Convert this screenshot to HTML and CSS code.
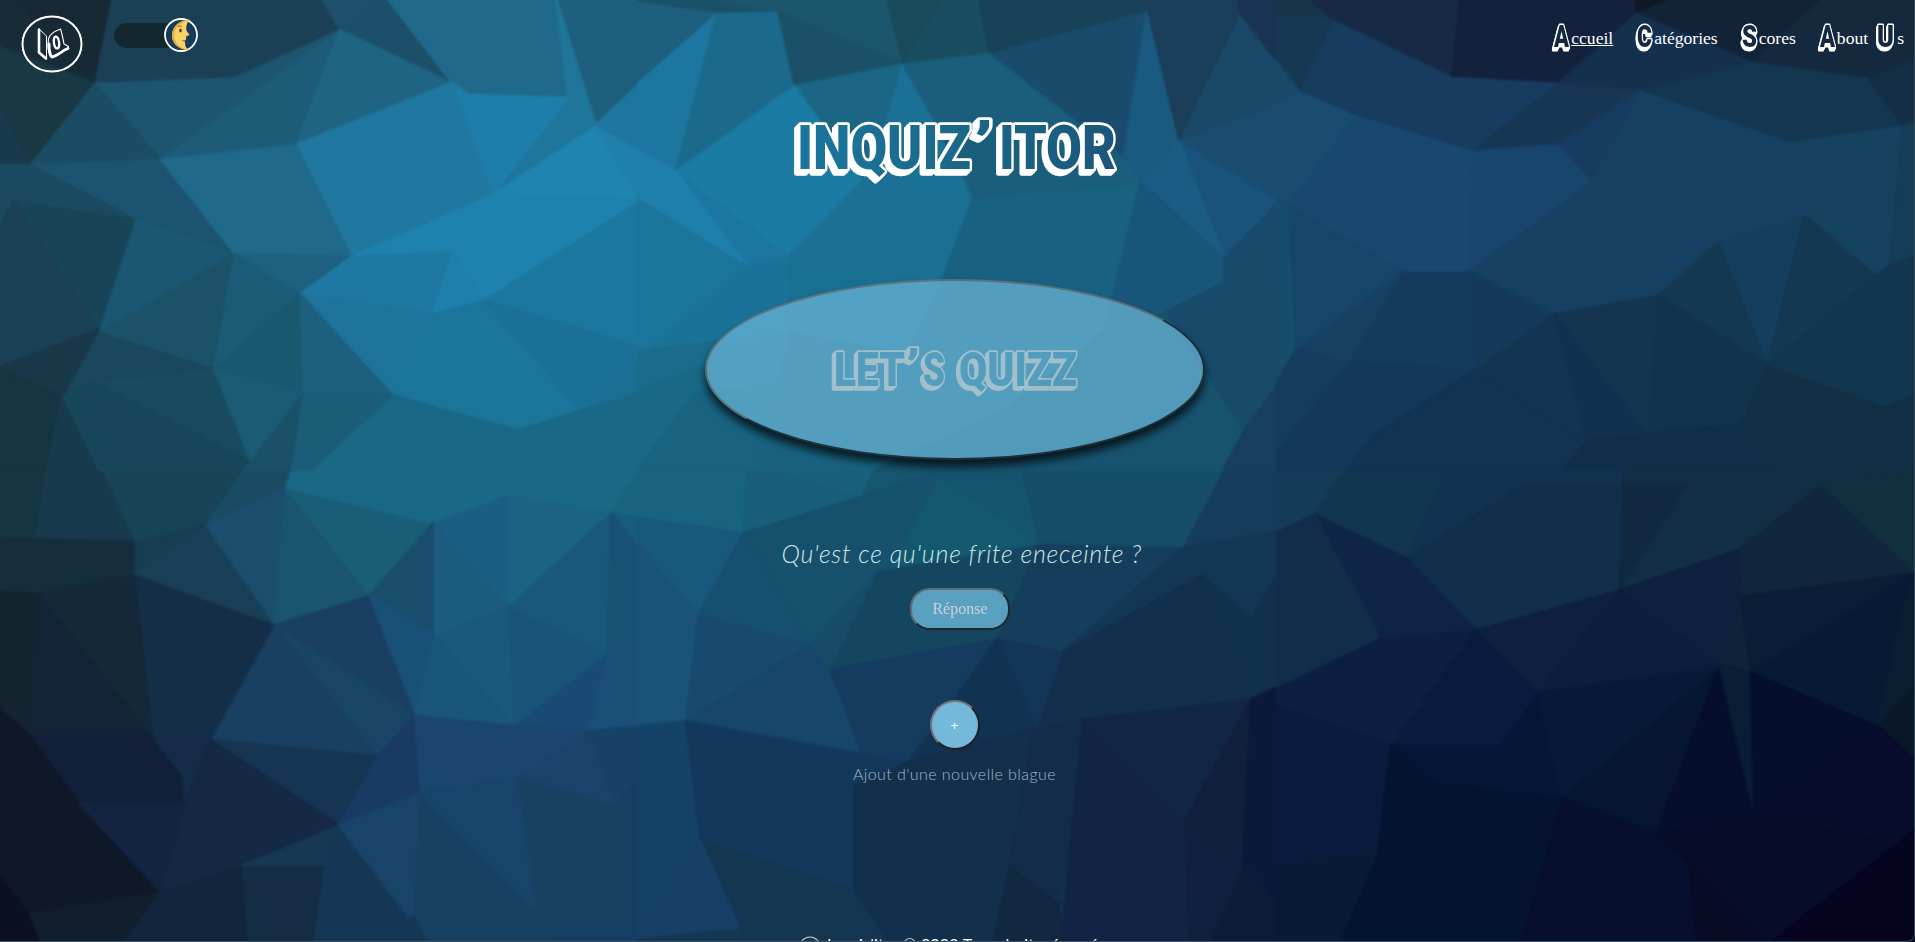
FILE: index.html
```html
<!DOCTYPE html>
<html lang="fr">
<head>
<meta charset="utf-8">
<title>Inquiz'itor</title>
<link rel="stylesheet" href="styles.css">
</head>
<body>
<div class="page">
<svg class="backdrop" viewBox="0 0 1915 942" preserveAspectRatio="none" aria-hidden="true">
<!-- top left facets -->
<svg x="0" y="0" width="640" height="471" viewBox="0 0 1568 1413" preserveAspectRatio="none">
<path color="#1b5570" d="M0 0H1568V1413H0z"/>
<path color="#182c38" d="M0 0 45 0 240 258 0 145z"/><path color="#162935" d="M45 0 283 0 240 258z"/><path color="#1b4055" d="M283 0 790 0 838 98 580 242 240 258z"/><path color="#183843" d="M0 145 240 258 82 500 0 310z"/><path color="#183a4c" d="M0 310 82 500 0 500z"/><path color="#1d506a" d="M790 0 950 0 838 98z"/><path color="#1d5570" d="M240 258 580 242 838 98 400 485z"/><path color="#1d5b79" d="M838 98 730 440 400 485z"/><path color="#1c4f69" d="M950 0 1110 255 838 98z"/><path color="#1f6483" d="M838 98 1110 255 730 440z"/><path color="#1f6a8b" d="M950 0 1365 0 1400 300 1150 290 1110 255z"/><path color="#1d5f7c" d="M1365 0 1568 0 1568 260 1462 380z"/><path color="#20759b" d="M1365 0 1462 380 1210 590 1395 300z"/><path color="#1e7eaa" d="M1110 255 1150 290 1395 300 1210 590z"/><path color="#2078a1" d="M730 440 1110 255 1210 590 865 775z"/><path color="#1f84b0" d="M1210 590 1462 385 1568 600z"/><path color="#1e76a0" d="M1462 380 1568 260 1568 460z"/><path color="#1f80aa" d="M1462 385 1568 460 1568 600z"/>
<path color="#1b4c63" d="M240 258 400 485 82 500z"/><path color="#1c5370" d="M82 500 400 485 580 765 340 665z"/><path color="#1a4a60" d="M0 500 82 500 340 665 40 610 0 700z"/><path color="#174457" d="M40 610 340 665 250 990z"/><path color="#1a4055" d="M0 700 40 610 250 990 0 1105z"/><path color="#1b5773" d="M340 665 580 765 250 1000z"/><path color="#1f698a" d="M400 485 730 440 865 775 580 765z"/><path color="#1d6080" d="M580 765 865 775 740 885z"/><path color="#1e82ae" d="M865 775 1210 590 1568 600 1568 615 1190 905 1115 760z"/><path color="#1f78a1" d="M865 775 1115 760 1065 945 740 885z"/><path color="#1e80aa" d="M1115 760 1190 905 1065 945z"/><path color="#1b779e" d="M1568 610 1568 1040 1190 905z"/><path color="#1e739a" d="M740 885 1065 945 965 1185z"/><path color="#1b759b" d="M1065 945 1190 905 1435 1245 1270 1290 965 1185z"/><path color="#1a7097" d="M1190 905 1568 1040 1568 1090 1435 1245z"/><path color="#1b6e93" d="M1568 1090 1568 1180 1435 1245z"/><path color="#196886" d="M965 1185 1270 1290 1568 1180 1568 1413 765 1413z"/>
<path color="#1b5268" d="M580 765 250 1000 530 1110z"/><path color="#1b5b78" d="M580 765 740 885 530 1110z"/><path color="#1a5870" d="M740 885 750 1180 530 1110z"/><path color="#1c5f7e" d="M740 885 965 1185 750 1180z"/><path color="#19475d" d="M250 1000 530 1110 235 1150 160 1190z"/><path color="#18384a" d="M250 990 160 1190 0 1105z"/><path color="#153540" d="M0 1105 160 1190 120 1413 0 1413z"/><path color="#173a4c" d="M160 1190 250 1413 120 1413z"/><path color="#194a5e" d="M235 1150 530 1110 620 1385z"/><path color="#17465a" d="M160 1190 235 1150 620 1385 600 1413 250 1413z"/><path color="#1b5b76" d="M530 1110 750 1180 620 1385z"/><path color="#1a5068" d="M750 1180 720 1413 600 1413 620 1385z"/><path color="#1b5d79" d="M750 1180 965 1185 765 1413 720 1413z"/>
</svg>
<!-- top middle facets -->
<svg x="638" y="0" width="640" height="471" viewBox="0 0 1568 1413" preserveAspectRatio="none">
<path color="#18527a" d="M0 0H1568V1413H0z"/>
<path color="#1a5068" d="M0 0 150 0 345 45 195 45 0 15z"/><path color="#1d5f7c" d="M0 15 195 50 0 260z"/><path color="#1d76a0" d="M195 50 95 520 0 455 0 260z"/><path color="#1b6a8b" d="M195 50 345 45 385 265 95 520z"/><path color="#1b566d" d="M150 0 610 0 650 200 345 45z"/><path color="#1a5168" d="M345 45 650 200 385 265z"/><path color="#184a5b" d="M610 0 755 0 650 200z"/><path color="#194e60" d="M755 0 835 0 860 170 650 200z"/><path color="#184258" d="M835 0 1240 0 1240 50 860 170z"/><path color="#194b6c" d="M860 170 1245 45 1190 470z"/><path color="#1b6684" d="M385 265 650 200 610 370 550 550z"/><path color="#1b7ba3" d="M385 265 95 520 370 775 550 550z"/><path color="#1c76a0" d="M95 520 370 775 270 805z"/><path color="#1e80aa" d="M0 455 95 520 270 805 0 600z"/><path color="#1b759b" d="M0 600 270 805 30 1050 0 1050z"/><path color="#1b7298" d="M270 800 370 775 375 1000 30 1050z"/><path color="#1a6f93" d="M550 550 820 600 740 860 630 840 370 775z"/><path color="#1b7095" d="M650 200 820 600 550 550 610 370z"/><path color="#1a5e7c" d="M650 200 860 170 1225 520 1230 560 820 600 780 480z"/><path color="#186180" d="M820 600 1230 560 1140 1000 740 860z"/><path color="#1a5a80" d="M1245 45 1325 430 1230 550 1190 470z"/><path color="#1a3d5a" d="M1240 0 1465 0 1475 50 1325 430z"/><path color="#1a4868" d="M1475 50 1568 200 1568 320 1325 430z"/><path color="#183452" d="M1465 0 1568 0 1568 200 1475 50z"/><path color="#1a4c70" d="M1325 430 1568 320 1568 610z"/><path color="#19527a" d="M1325 430 1568 610 1435 780z"/><path color="#1a5c84" d="M1230 550 1325 430 1435 780z"/><path color="#195578" d="M1230 550 1435 780 1435 850 1290 940 1140 1000z"/><path color="#174a6b" d="M1435 780 1568 610 1568 1150 1480 1300 1290 940 1435 850z"/><path color="#196f91" d="M370 775 640 840 740 860 660 1060 375 1000z"/><path color="#1a6c8c" d="M0 1050 30 1050 375 1000 340 1200 0 1180z"/><path color="#196886" d="M0 1175 160 1100 350 1150 290 1413 0 1413z"/><path color="#176380" d="M0 1413 140 1180 350 1150 290 1413z"/><path color="#18627f" d="M375 1000 660 1060 740 860 1140 1000 900 1230 580 1413 285 1413z"/><path color="#17536f" d="M1140 1000 1290 940 1480 1300 1430 1413 580 1413 900 1230z"/><path color="#163e5e" d="M1480 1300 1568 1150 1568 1413 1430 1413z"/>
</svg>
<!-- top right facets -->
<svg x="1275" y="0" width="640" height="471" viewBox="0 0 1568 1413" preserveAspectRatio="none">
<path color="#143650" d="M0 0H1568V1413H0z"/>
<path color="#173448" d="M0 0 80 0 130 60 0 60z"/><path color="#173852" d="M0 60 135 60 60 285 0 190z"/><path color="#18486a" d="M0 190 60 285 0 320z"/><path color="#162a45" d="M80 0 450 0 430 240 140 70z"/><path color="#13223c" d="M450 0 880 0 880 50 690 258 430 240z"/><path color="#101825" d="M880 0 980 0 880 50z"/><path color="#122338" d="M980 0 1340 0 1165 195 880 50z"/><path color="#14293e" d="M1340 0 1568 0 1568 180 1465 245 1165 195z"/><path color="#15304c" d="M880 50 1165 195 880 285 690 258z"/><path color="#183b60" d="M140 70 430 240 690 258 480 460 195 355 60 285z"/><path color="#163654" d="M690 258 890 280 690 440 480 460z"/><path color="#143650" d="M1165 195 1450 245 1530 385 1255 435 890 280z"/><path color="#142f45" d="M1450 245 1568 180 1568 370 1530 385z"/><path color="#184c70" d="M60 285 195 355 30 620 0 600 0 320z"/><path color="#18486f" d="M195 355 480 460 470 820 310 820 30 620z"/><path color="#18456e" d="M480 460 690 440 775 550 470 820z"/><path color="#173c62" d="M690 440 890 280 775 550z"/><path color="#154062" d="M890 280 1255 435 1300 650 1080 730 935 890 680 945 470 820 775 550z"/><path color="#14425f" d="M1255 435 1530 385 1500 800 1465 830 1300 650z"/><path color="#143d57" d="M1530 385 1568 370 1568 770 1500 800z"/><path color="#174d6c" d="M0 600 30 620 50 1040 0 1150z"/><path color="#16456a" d="M30 620 310 820 50 1050z"/><path color="#154063" d="M310 820 180 1090 50 1050z"/><path color="#153a60" d="M310 820 470 820 490 1110 180 1090z"/><path color="#15395a" d="M470 820 680 945 490 1110z"/><path color="#143e5e" d="M1080 730 1290 655 1200 1100z"/><path color="#143850" d="M935 890 1080 730 1200 1100z"/><path color="#143852" d="M1290 655 1465 830 1200 1100z"/><path color="#12364f" d="M1500 800 1568 770 1568 1180 1490 1225 1200 1100 1465 830z"/><path color="#14344f" d="M680 945 935 890 910 1310z"/><path color="#143552" d="M490 1110 680 945 760 1320z"/><path color="#12314f" d="M680 945 910 1310 760 1320z"/><path color="#11344c" d="M935 890 1200 1100 1140 1270 910 1310z"/><path color="#143c5f" d="M0 1150 50 1050 180 1090 0 1360z"/><path color="#14385a" d="M180 1090 490 1110 235 1310 170 1413 0 1413 0 1360z"/><path color="#123352" d="M490 1110 760 1320 700 1413 170 1413 235 1310z"/><path color="#112f45" d="M1200 1100 1490 1225 1568 1180 1568 1413 1230 1413 1140 1270z"/><path color="#112e49" d="M760 1320 1140 1270 1230 1413 700 1413z"/>
</svg>
<!-- bottom left facets -->
<svg x="0" y="471" width="640" height="471" viewBox="0 0 1568 1413" preserveAspectRatio="none">
<path color="#153552" d="M0 0H1568V1413H0z"/>
<path color="#153640" d="M0 0 120 0 95 205 0 200z"/><path color="#173a4c" d="M120 0 260 0 340 210 95 205z"/><path color="#174457" d="M260 0 600 0 510 160 340 210z"/><path color="#194c62" d="M600 0 720 0 705 50 510 160z"/><path color="#152e3e" d="M0 200 340 210 330 310 100 365 0 360z"/><path color="#173d50" d="M340 210 510 160 340 305z"/><path color="#183f55" d="M340 305 510 160 675 460z"/><path color="#1a4e6c" d="M510 160 705 50 680 460z"/><path color="#1a5471" d="M705 50 905 370 680 460z"/><path color="#1a5d78" d="M705 50 1065 155 910 370z"/><path color="#196886" d="M720 0 1568 0 1500 125 1255 75 1065 155 705 50z"/><path color="#18647f" d="M1568 0 1568 140 1500 125z"/><path color="#185b7c" d="M1500 125 1568 140 1568 230z"/><path color="#1a5f83" d="M1065 155 1250 75 1250 405z"/><path color="#1a6382" d="M1250 75 1500 125 1250 405z"/><path color="#194d6c" d="M1065 155 1070 490 910 370z"/><path color="#1b5c7e" d="M1070 155 1250 405 1070 495z"/><path color="#19587c" d="M1500 125 1490 550 1250 405z"/><path color="#195175" d="M1500 125 1568 230 1568 500 1490 550z"/><path color="#1a587c" d="M1250 405 1260 760 1070 495z"/><path color="#195478" d="M1250 405 1490 550 1265 760z"/><path color="#195078" d="M910 370 1070 490 1020 730z"/><path color="#1a557c" d="M1070 490 1260 760 1020 730z"/><path color="#193f60" d="M675 460 905 375 1020 730z"/><path color="#184466" d="M675 460 1020 730 930 850z"/><path color="#193f62" d="M675 460 930 850 520 800z"/><path color="#194a75" d="M1490 550 1450 775 1265 760z"/><path color="#1a5077" d="M1490 550 1568 500 1568 760 1450 775z"/><path color="#152e48" d="M335 312 675 460 520 800 380 790z"/><path color="#152838" d="M100 365 335 312 380 790z"/><path color="#13242f" d="M0 360 100 365 80 790 0 700z"/><path color="#142438" d="M100 365 378 790 80 790z"/><path color="#121f38" d="M80 790 380 790 455 910 455 990 200 990z"/><path color="#0f1829" d="M0 700 80 790 200 990 395 1255 75 1320 0 1195z"/><path color="#152c48" d="M380 790 520 800 460 990 455 910z"/><path color="#163552" d="M520 800 930 850 835 1055z"/><path color="#193a62" d="M930 850 1020 730 1035 960 835 1055z"/><path color="#19456e" d="M1020 730 1265 760 1450 775 1275 915 1035 960z"/><path color="#18446c" d="M1450 775 1510 1000 1275 915z"/><path color="#164268" d="M1450 775 1568 760 1568 920 1510 1000z"/><path color="#152844" d="M520 800 835 1055 595 1170z"/><path color="#142844" d="M520 800 595 1180 400 1250 460 990z"/><path color="#132440" d="M200 990 460 990 400 1255z"/><path color="#173853" d="M835 1055 800 1180 595 1180z"/><path color="#142d44" d="M595 1180 800 1180 775 1413 610 1413z"/><path color="#13253d" d="M400 1255 595 1180 610 1413 300 1413z"/><path color="#111e2e" d="M75 1320 395 1255 300 1413 105 1413z"/><path color="#0c1020" d="M0 1195 75 1320 105 1413 0 1413z"/><path color="#153655" d="M835 1055 1020 1330 1060 1413 775 1413 800 1180z"/><path color="#174468" d="M835 1055 1035 960 1020 1320 1005 1330z"/><path color="#164062" d="M1035 960 1320 1310 1370 1413 1060 1413 1020 1320z"/><path color="#16446a" d="M1035 960 1275 915 1320 1310z"/><path color="#164060" d="M1275 915 1510 1000 1320 1310z"/><path color="#153f62" d="M1510 1000 1568 920 1568 1413 1370 1413 1320 1310z"/>
</svg>
<!-- bottom middle facets -->
<svg x="638" y="471" width="640" height="471" viewBox="0 0 1568 1413" preserveAspectRatio="none">
<path color="#123250" d="M0 0H1568V1413H0z"/>
<path color="#176380" d="M0 0 270 0 260 185 0 140z"/><path color="#185e7a" d="M270 0 340 0 550 75 260 185z"/><path color="#17617c" d="M340 0 580 0 550 75z"/><path color="#16566f" d="M550 75 580 0 750 0z"/><path color="#18587c" d="M0 140 260 185 150 430 0 220z"/><path color="#1a5278" d="M0 220 150 430 120 745 0 760z"/><path color="#16506c" d="M260 185 550 75 740 0 740 20 590 300 420 520z"/><path color="#174f70" d="M260 185 420 520 150 430z"/><path color="#16526e" d="M550 75 740 20 620 295 590 300z"/><path color="#14586e" d="M740 20 985 220 870 290 620 295z"/><path color="#15546e" d="M700 0 940 0 985 220 740 20z"/><path color="#164d68" d="M940 0 1435 0 1330 230 985 220z"/><path color="#153c5a" d="M1435 0 1568 0 1568 190 1330 240z"/><path color="#174a6e" d="M150 430 420 520 120 745z"/><path color="#164c68" d="M420 520 590 300 470 600z"/><path color="#16466a" d="M420 520 470 600 550 850 120 745z"/><path color="#154660" d="M590 300 985 220 880 500 475 590z"/><path color="#153e5c" d="M985 220 1330 230 1040 540 880 500z"/><path color="#143655" d="M1330 230 1568 180 1568 300 1500 440 1380 310 1040 540z"/><path color="#122f4c" d="M1380 310 1500 680 1090 740 975 770 1040 540z"/><path color="#11304c" d="M1380 310 1500 440 1568 300 1568 640 1500 680z"/><path color="#153c60" d="M475 590 880 500 770 690 660 870 550 850z"/><path color="#133556" d="M880 500 1040 540 975 770z"/><path color="#123252" d="M880 500 975 770 920 820 660 870 770 690z"/><path color="#154268" d="M0 760 120 745 140 1000 155 1100 0 1390z"/><path color="#14385d" d="M120 745 660 870 530 940 530 1250 155 1100z"/><path color="#143650" d="M155 1100 530 1250 620 1413 250 1413z"/><path color="#143852" d="M0 1390 250 1360 250 1413 0 1413z"/><path color="#164068" d="M155 1100 250 1360 0 1390z"/><path color="#122f4c" d="M530 940 660 870 970 770 910 1180 870 1413 620 1413 530 1250z"/><path color="#122c4a" d="M970 775 1090 740 1060 1100 1030 1290 910 1180z"/><path color="#112840" d="M910 1180 1030 1290 1040 1413 870 1413z"/><path color="#112645" d="M1090 740 1500 680 1340 1040z"/><path color="#112443" d="M1090 740 1340 1040 1350 1413 1035 1413 1060 1100z"/><path color="#0f1f3c" d="M1500 680 1485 1190 1340 1040z"/><path color="#0a193a" d="M1500 680 1568 640 1568 1290 1480 1180z"/><path color="#101f3d" d="M1340 1040 1485 1190 1400 1413 1350 1413z"/><path color="#0d1b38" d="M1485 1180 1568 1290 1568 1413 1400 1413z"/>
</svg>
<!-- bottom right facets -->
<svg x="1275" y="471" width="640" height="471" viewBox="0 0 1568 1413" preserveAspectRatio="none">
<path color="#0a1c38" d="M0 0H1568V1413H0z"/>
<path color="#143b58" d="M0 0 165 0 95 130 0 185z"/><path color="#123550" d="M165 0 415 0 320 260 95 130z"/><path color="#123350" d="M415 0 850 0 840 45 600 45 320 260z"/><path color="#112e4a" d="M320 260 600 45 850 45 840 355 490 475z"/><path color="#112e45" d="M850 0 1568 0 1330 45 1130 235 840 355z"/><path color="#102840" d="M850 45 1000 45 840 355z"/><path color="#10303f" d="M1330 45 1568 0 1568 310z"/><path color="#10263c" d="M1130 235 1330 45 1560 305 1135 375z"/><path color="#0f2545" d="M95 130 320 260 255 500z"/><path color="#112d4a" d="M0 185 95 130 255 500 0 650z"/><path color="#0f2347" d="M320 260 490 475 255 500z"/><path color="#0c1f40" d="M0 650 255 500 490 475 280 815 0 700z"/><path color="#0a1a3d" d="M490 475 550 820 280 820z"/><path color="#081a3d" d="M490 475 640 665 550 820z"/><path color="#0e1f3f" d="M490 475 840 355 640 660z"/><path color="#0b1e3e" d="M840 355 1090 575 640 660z"/><path color="#0e203e" d="M840 355 1130 235 1135 375 1090 575z"/><path color="#0f223a" d="M1135 375 1160 600 1090 575z"/><path color="#0a1c36" d="M1135 375 1560 305 1160 600z"/><path color="#081a33" d="M1160 600 1560 305 1470 760z"/><path color="#0a1e33" d="M1470 760 1545 340 1568 310 1568 630z"/><path color="#081828" d="M1470 760 1568 630 1568 870z"/><path color="#0a1a3d" d="M0 700 280 815 250 1130 0 1180z"/><path color="#051536" d="M280 820 550 820 640 665 700 975 390 930z"/><path color="#061a38" d="M640 660 1080 590 700 975z"/><path color="#051532" d="M1080 590 930 1080 700 975z"/><path color="#050f2d" d="M1080 590 1165 1030 930 1080z"/><path color="#091d35" d="M1085 575 1160 600 1168 1010z"/><path color="#050f2d" d="M1160 600 1470 760 1168 1030z"/><path color="#070d2b" d="M1470 760 1568 870 1568 1080 1520 1110 1165 1030z"/><path color="#041430" d="M250 1130 280 820 390 930 700 975 600 1413 150 1413z"/><path color="#081a35" d="M0 1180 250 1130 150 1413 0 1413z"/><path color="#060f2d" d="M700 975 930 1080 1010 1170 1030 1413 600 1413z"/><path color="#070c28" d="M930 1080 1165 1030 1520 1110 1200 1413 1010 1170z"/><path color="#060420" d="M1520 1110 1568 1060 1568 1413 1200 1413z"/><path color="#080a26" d="M1010 1170 1200 1413 1030 1413z"/>
</svg>
</svg>

<header class="header">
  <svg class="logo" viewBox="0 0 62 58" aria-label="IQ">
    <ellipse cx="31" cy="29" rx="29.500" ry="27.500" fill="none" stroke="#fff" stroke-width="2"/>
    <g fill="none" stroke="#fff" stroke-linejoin="round" stroke-linecap="round">
      <path d="M18 14.5v23l7 6" stroke-width="2.6"/>
      <path d="M18 14l7.500 7v22.500" stroke-width="1"/>
      <path d="M27.500 24c1-5 6.500-8 12-10 1.500 4 2.300 9 3.500 15l4.500 2.500-1.500 3-3 1c-4 2.500-8 4.500-12 6-4-3-4.500-11-3.500-17.500z" stroke-width="1.100"/>
      <path d="M28 29c0 7 1.500 13 3.500 13 4.500-1.500 8-4 12-7l3.500-1.500" stroke-width="2.800"/>
      <ellipse cx="35.500" cy="27.500" rx="2.600" ry="6" stroke-width="2.200" transform="rotate(-8 35.500 27.500)"/>
    </g>
  </svg>
  <div class="toggle">
    <svg class="knob" viewBox="0 0 34 34" aria-label="Mode nuit">
      <circle cx="17" cy="17" r="16" fill="#173a5c" stroke="#fff" stroke-width="1.800"/>
      <path d="M26 1.800C15 2 8 9 8 17.500 8 26 15.500 32.500 26 32c-4-1.500-5.200-4-4.800-7l-.7-2 1.500-1.200.2-3.500 3.400-1.300-3.200-4.500C22 7.500 23 4.500 26 1.800z" fill="#f7d266"/>
      <path d="M26 1.800C15 2 8 9 8 17.500 8 26 15.500 32.500 26 32 15 30.500 10 24 10 17S16 4.500 26 1.800z" fill="#e3ab40"/>
      <ellipse cx="16.500" cy="12.500" rx="1.200" ry="1.900" fill="#4a3220"/>
      <path d="M14 8.800q2-1.500 4-.3M18 22.500q2 1 3.200-.5" stroke="#a66b26" stroke-width="1" fill="none"/>
    </svg>
  </div>
  <nav class="nav">
    <a class="active"><svg class="cap"><text x="2" y="26" textLength="15" lengthAdjust="spacingAndGlyphs">A</text></svg><span>ccueil</span></a>
    <a><svg class="cap"><text x="2" y="26" textLength="15" lengthAdjust="spacingAndGlyphs">C</text></svg><span>atégories</span></a>
    <a><svg class="cap"><text x="2" y="26" textLength="15" lengthAdjust="spacingAndGlyphs">S</text></svg><span>cores</span></a>
    <a><svg class="cap"><text x="2" y="26" textLength="15" lengthAdjust="spacingAndGlyphs">A</text></svg><span>bout</span><svg class="cap second"><text x="2" y="26" textLength="17" lengthAdjust="spacingAndGlyphs">U</text></svg><span>s</span></a>
  </nav>
</header>

<main class="main">
  <h1 class="title">
    <svg width="330" height="72" viewBox="0 0 330 72">
      <defs><linearGradient id="ink" gradientUnits="userSpaceOnUse" x1="0" y1="0" x2="330" y2="0"><stop offset="0" stop-color="#1c76a0"/><stop offset=".5" stop-color="#1a6988"/><stop offset="1" stop-color="#1b567b"/></linearGradient></defs>
      <text class="title-text" y="59"><tspan x="7" textLength="174" lengthAdjust="spacingAndGlyphs">INQUIZ</tspan><tspan class="tick" x="184" y="56" textLength="19" lengthAdjust="spacingAndGlyphs">’</tspan><tspan x="209" y="59" textLength="117" lengthAdjust="spacingAndGlyphs">ITOR</tspan></text>
    </svg>
  </h1>
  <button class="quiz">
    <svg width="254" height="56" viewBox="0 0 254 56">
      <text class="quiz-text" y="44"><tspan x="6" textLength="71" lengthAdjust="spacingAndGlyphs">LET</tspan><tspan class="tick" x="78" y="42" textLength="14" lengthAdjust="spacingAndGlyphs">’</tspan><tspan x="95" y="44" textLength="22" lengthAdjust="spacingAndGlyphs">S</tspan><tspan x="131" textLength="118" lengthAdjust="spacingAndGlyphs">QUIZZ</tspan></text>
    </svg>
  </button>
  <p class="riddle">Qu'est ce qu'une frite eneceinte ?</p>
  <button class="answer">Réponse</button>
  <button class="add">+</button>
  <p class="hint">Ajout d'une nouvelle blague</p>
</main>

<footer class="footer">
  <svg width="22" height="22" viewBox="0 0 22 22"><circle cx="11" cy="11" r="10" fill="none" stroke="#b9cbd6" stroke-width="1.200"/><path d="M7 7v8M11 8l4-2v7l-3 2z" stroke="#fff" fill="none"/></svg>
  <span>Inquiz'itor © 2022 Tous droits réservés</span>
</footer>
<div class="edge"></div>
</div>
</body>
</html>
```

FILE: styles.css
```css
* { box-sizing: border-box; }

html, body {
  margin: 0;
  height: 100%;
  overflow: hidden;
  background: #10172f;
}

.page {
  position: relative;
  width: 1915px;
  height: 942px;
  overflow: hidden;
  color: #fff;
}

/* slightly larger than the page so the soft edge stays outside */
.backdrop {
  position: absolute;
  top: -3px;
  left: -3px;
  width: 1921px;
  height: 948px;
  filter: blur(1px);
}

.backdrop path {
  fill: currentColor;
  stroke: currentColor;
  stroke-width: 5;
  stroke-linejoin: round;
}

/* window border lying over the page content */
.edge {
  position: absolute;
  inset: 0;
  border-right: 1px solid #33475a;
  border-bottom: 1px solid #3a5064;
  border-radius: 0 0 8px 0;
}

.header {
  position: relative;
  display: flex;
  align-items: flex-start;
  height: 86px;
  padding-right: 11px;
}

.logo {
  width: 62px;
  height: 58px;
  margin: 15px 0 0 21px;
}

.toggle {
  display: flex;
  align-items: center;
  justify-content: flex-end;
  width: 84px;
  height: 25px;
  margin: 23px 0 0 31px;
  border-radius: 13px;
  background: linear-gradient(90deg, #132730 70px, transparent 70px);
}

.knob {
  flex: none;
  width: 34px;
  height: 34px;
  margin: -2px 0 0;
}

.nav {
  display: flex;
  gap: 22px;
  margin: 21px 0 0 auto;
}

.nav a {
  display: flex;
  align-items: flex-start;
  font: 17.6px/20px "Liberation Serif", "Times New Roman", serif;
}

.nav span { margin-top: 7px; }
.nav .active span { text-decoration: underline; }

.cap {
  width: 19px;
  height: 34px;
  overflow: visible;
}

.cap.second {
  width: 22px;
  margin-left: 7px;
}

.cap text {
  font: 900 32px Roboto, "Open Sans", sans-serif;
  fill: #14283f;
  stroke: #fff;
  stroke-width: 3;
  stroke-linejoin: round;
  paint-order: stroke;
  filter: drop-shadow(-1px 2px 0 #fff) drop-shadow(0 1px 0 #fff);
}

.main {
  position: relative;
  display: flex;
  flex-direction: column;
  align-items: center;
  width: 1909px;
}

.title {
  height: 72px;
  margin: 24px 0 0;
}

.title svg, .quiz svg { display: block; overflow: visible; }

.title-text, .quiz-text {
  font-family: Roboto, "Open Sans", sans-serif;
  font-weight: 900;
  stroke-linejoin: round;
  paint-order: stroke;
}

.title-text {
  font-size: 62px;
  fill: url(#ink);
  stroke: #fff;
  stroke-width: 5.5;
  filter: drop-shadow(-2px 2px 0 #fff) drop-shadow(-2px 2px 0 #fff);
}

.quiz {
  display: flex;
  align-items: center;
  justify-content: center;
  width: 500px;
  height: 181px;
  margin: 97px 0 0;
  padding: 0;
  border: 2px solid;
  border-color: #767676 #212121 #212121 #767676;
  border-radius: 50%;
  background: #6cb8da;
  box-shadow: 0 7px 8px #000;
  opacity: .7;
}

.quiz-text {
  font-size: 49px;
  fill: #6cb8da;
  stroke: #dbe8ec;
  stroke-width: 3.5;
  filter: drop-shadow(-2px 2px 0 #dbe8ec) drop-shadow(-1px 1px 0 #dbe8ec);
}

.riddle {
  width: 361px;
  margin: 77px 0 0 15px;
  font: italic 300 25px/32px Lato, sans-serif;
  letter-spacing: .74px;
  white-space: nowrap;
  color: #cfe6ea;
}

.answer {
  width: 100px;
  height: 42px;
  margin: 19px 0 0 11px;
  padding: 0;
  border: 2px solid;
  border-color: #767676 #212121 #212121 #767676;
  border-radius: 20px;
  background: #6cb8da;
  color: #f3f5f6;
  font: 16px "Liberation Serif", serif;
  opacity: .8;
}

.add {
  width: 50px;
  height: 50px;
  margin: 70px 0 0;
  padding: 0;
  border: 2px solid;
  border-color: #767676 #212121 #212121 #767676;
  border-radius: 50%;
  background: #74b9da;
  color: #fff;
  font: 13.333px "Liberation Sans", Arial, sans-serif;
}

.hint {
  margin: 14px 0 0;
  font: 300 16px/20px Lato, sans-serif;
  letter-spacing: .43px;
  color: #a4b7c4;
  white-space: nowrap;
}

.footer {
  position: relative;
  display: flex;
  align-items: flex-start;
  gap: 6px;
  margin: 152px 0 0 799px;
  font: 16px/20px Lato, sans-serif;
}

.footer svg { flex: none; }
.footer span { margin-top: -2px; letter-spacing: .2px; white-space: nowrap; }
```
